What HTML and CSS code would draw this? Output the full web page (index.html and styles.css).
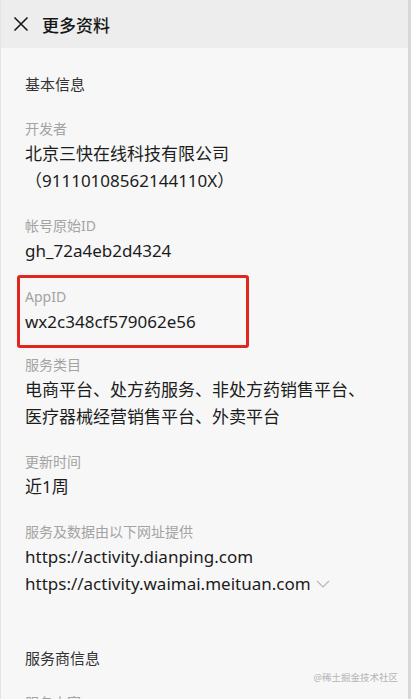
FILE: index.html
```html
<!DOCTYPE html>
<html lang="zh-CN">
<head>
    <meta charset="UTF-8">
    <title>更多资料</title>
    <link rel="stylesheet" href="styles.css">
</head>
<body>
    <div class="pagina">
        <div class="topo">
            <svg class="fechar" width="16" height="16" viewBox="0 0 16 16">
                <path d="M1.5 1.5 L14.5 14.5 M14.5 1.5 L1.5 14.5" stroke="#1a1a1a" stroke-width="1.6" fill="none"/>
            </svg>
            <span class="titulo">更多资料</span>
        </div>

        <div class="secao">
            <h2>基本信息</h2>

            <div class="item">
                <div class="rotulo">开发者</div>
                <div class="valor">北京三快在线科技有限公司（91110108562144110X）</div>
            </div>

            <div class="item">
                <div class="rotulo">帐号原始ID</div>
                <div class="valor">gh_72a4eb2d4324</div>
            </div>

            <div class="item marcado">
                <div class="rotulo">AppID</div>
                <div class="valor">wx2c348cf579062e56</div>
            </div>

            <div class="item">
                <div class="rotulo">服务类目</div>
                <div class="valor">电商平台、处方药服务、非处方药销售平台、医疗器械经营销售平台、外卖平台</div>
            </div>

            <div class="item">
                <div class="rotulo">更新时间</div>
                <div class="valor">近1周</div>
            </div>

            <div class="item">
                <div class="rotulo">服务及数据由以下网址提供</div>
                <div class="valor">https://activity.dianping.com</div>
                <div class="valor">https://activity.waimai.meituan.com<svg class="seta" width="14" height="8" viewBox="0 0 14 8">
                        <path d="M1 1 L7 7 L13 1" stroke="#b8b8b8" stroke-width="1.2" fill="none"/>
                    </svg></div>
            </div>
        </div>

        <div class="secao segunda">
            <h2>服务商信息</h2>
            <div class="item">
                <div class="rotulo">服务内容</div>
                <div class="valor">小程序开发</div>
            </div>
        </div>

        <div class="marca">@稀土掘金技术社区</div>
    </div>
</body>
</html>
```

FILE: styles.css
```css
* {
    box-sizing: border-box;
}

body {
    margin: 0;
    font-family: "Noto Sans", "Noto Sans CJK SC", sans-serif;
    background-color: #f7f7f7;
    overflow: hidden;
}

.pagina {
    position: relative;
    height: 699px;
    overflow: hidden;
    background-color: #f7f7f7;
    border-left: 1px solid #e4e4e4;
    border-right: 3px solid #d8d8d8;
}

.topo {
    display: flex;
    align-items: center;
    height: 48px;
    padding-left: 12px;
    background-color: #ededed;
}

.fechar {
    flex-shrink: 0;
}

.titulo {
    margin-left: 13px;
    font-size: 17px;
    color: #161616;
    font-weight: 500;
}

.secao {
    padding: 24px 30px 0 24px;
}

.secao h2 {
    margin: 0 0 22px 0;
    font-size: 15px;
    line-height: 24px;
    font-weight: normal;
    color: #333;
}

.segunda {
    padding-top: 28px;
}

.item {
    margin-bottom: 21px;
}

.rotulo {
    font-size: 14px;
    line-height: 22px;
    color: #a3a3a3;
}

.valor {
    font-size: 17px;
    line-height: 27px;
    color: #1c1c1c;
}

.marcado {
    width: 232px;
    margin: -10px 0 6px -8px;
    padding: 8px 5px 10px 5px;
    border: 3px solid #e2251d;
    border-radius: 3px;
}

.seta {
    margin-left: 5px;
    vertical-align: 2px;
}

.marca {
    position: absolute;
    right: 10px;
    bottom: 15px;
    font-size: 9.5px;
    color: #b4b4b4;
}
```
